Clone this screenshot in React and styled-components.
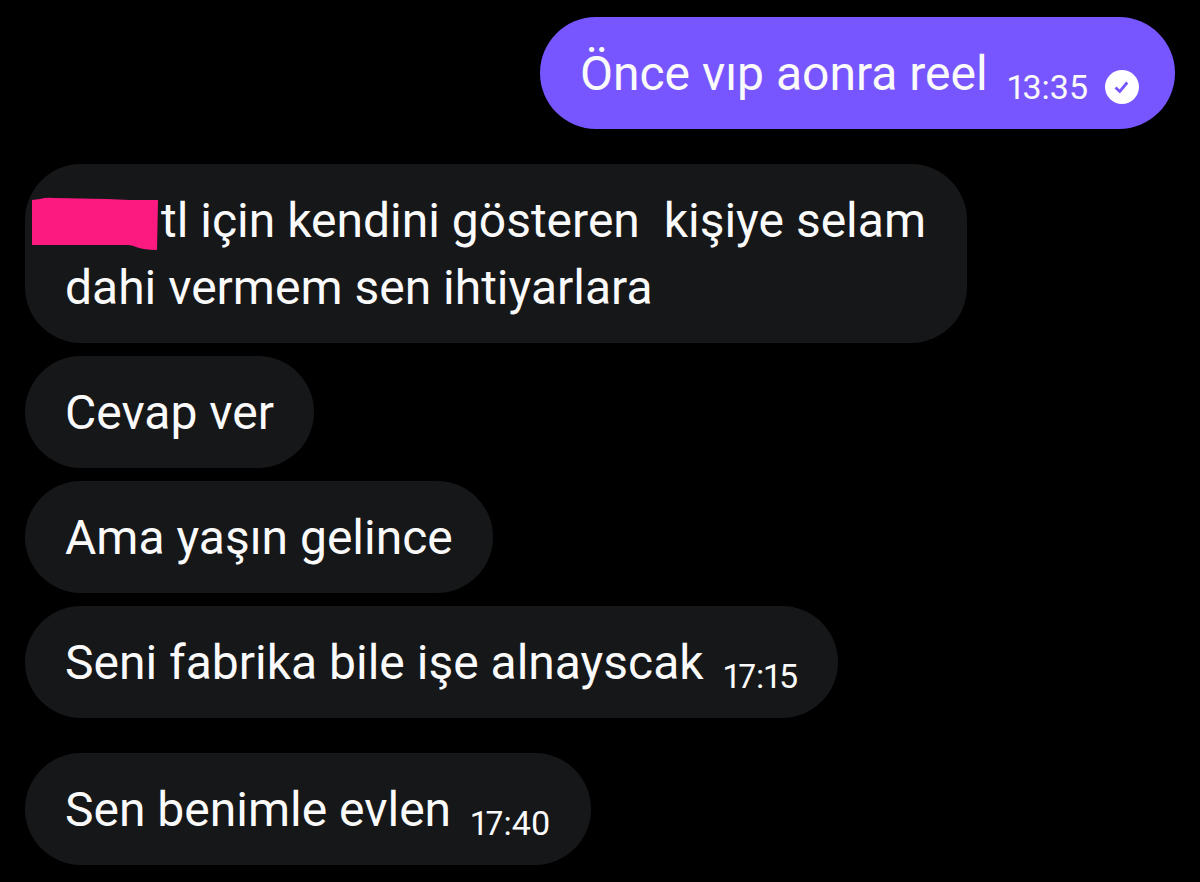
import React from "react";
import styled, { createGlobalStyle } from "styled-components";

const GlobalStyle = createGlobalStyle`
  * { box-sizing: border-box; }
  body {
    margin: 0;
    background: #000;
    color: #fafafa;
    font-family: Roboto, "Liberation Sans", sans-serif;
  }
`;

const Conversation = styled.main`
  display: flex;
  flex-direction: column;
  gap: 35px;
  padding: 17px 25px;
`;

const Group = styled.section`
  display: flex;
  flex-direction: column;
  align-items: ${(p) => (p.$mine ? "flex-end" : "flex-start")};
  gap: 13px;
`;

const Bubble = styled.article`
  display: flex;
  align-items: flex-end;
  gap: 20px;
  max-width: calc(100% - 208px);
  padding: 23px ${(p) => (p.$mine ? 36 : 40)}px 22px 40px;
  border-radius: 56px;
  background: ${(p) => (p.$mine ? "#7856ff" : "#161719")};
`;

const Text = styled.p`
  margin: 0;
  font-size: 48px;
  line-height: 67px;
  white-space: pre-wrap;
`;

const Meta = styled.div`
  display: flex;
  align-items: center;
  gap: 17px;
  flex: none;
`;

const Time = styled.time`
  font-size: 34px;
  font-variant-numeric: proportional-nums;
  line-height: 40px;
`;

const Hidden = styled.span`
  position: relative;
  display: inline-block;
  width: 96px;
  height: 34px;
`;

const Marker = styled.svg`
  position: absolute;
  right: 2px;
  bottom: -14px;
`;

function Redaction() {
  return (
    <Hidden>
      <Marker width="127" height="54" viewBox="0 0 127 54" aria-hidden="true">
        <path
          d="M0 3 L8 2 Q14 0 22 1 L75 2 L98 3 H126 L125 53 Q112 53 104 50 Q100 48 96 48 H0 Z"
          fill="#fd1a80"
        />
      </Marker>
    </Hidden>
  );
}

function SeenMark() {
  return (
    <svg width="34" height="34" viewBox="0 0 34 34" role="img" aria-label="Görüldü">
      <circle cx="17" cy="17" r="17" fill="#fff" />
      <path d="M10.5 17.5 L14.8 21.5 L22.2 12.5" fill="none" stroke="#7856ff" strokeWidth="2.8" />
    </svg>
  );
}

function Message({ mine, time, children }) {
  return (
    <Bubble $mine={mine}>
      <Text>{children}</Text>
      {time && (
        <Meta>
          <Time>{time}</Time>
          {mine && <SeenMark />}
        </Meta>
      )}
    </Bubble>
  );
}

export default function App() {
  return (
    <>
      <GlobalStyle />
      <Conversation lang="tr">
        <Group $mine>
          <Message mine time="13:35">Önce vıp aonra reel</Message>
        </Group>
        <Group>
          <Message>
            <Redaction />
            {"tl için kendini gösteren  kişiye selam dahi vermem sen ihtiyarlara"}
          </Message>
          <Message>Cevap ver</Message>
          <Message>Ama yaşın gelince</Message>
          <Message time="17:15">Seni fabrika bile işe alnayscak</Message>
        </Group>
        <Group>
          <Message time="17:40">Sen benimle evlen</Message>
        </Group>
      </Conversation>
    </>
  );
}
